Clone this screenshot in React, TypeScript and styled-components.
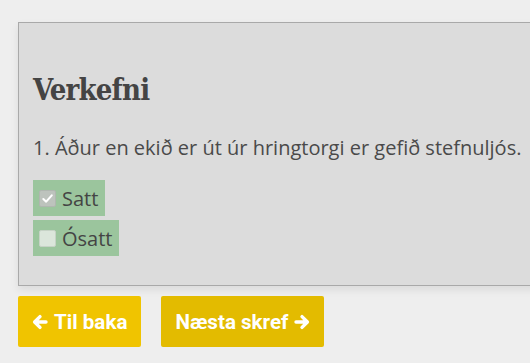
import React from 'react';
import styled, { createGlobalStyle } from 'styled-components';

const GlobalStyle = createGlobalStyle`
  html, body {
    margin: 0;
    padding: 0;
    background: #eeeeee;
    overflow: hidden;
  }
`;

type Option = {
  label: string;
  checked: boolean;
};

const options: Option[] = [
  { label: 'Satt', checked: true },
  { label: 'Ósatt', checked: false },
];

// bold arrow, drawn with a thick round-capped stroke
function Arrow({ flip }: { flip?: boolean }) {
  return (
    <svg
      width="16"
      height="16"
      viewBox="0 0 16 16"
      aria-hidden="true"
      style={flip ? { transform: 'scaleX(-1)' } : undefined}
    >
      <path
        d="M8 2.6 L2.6 8 L8 13.4 M2.8 8 L14 8"
        stroke="#fff"
        strokeWidth="3.4"
        strokeLinecap="round"
        strokeLinejoin="round"
        fill="none"
      />
    </svg>
  );
}

export default function App() {
  return (
    <>
      <GlobalStyle />
      <Page>
        <Panel>
          <Heading>Verkefni</Heading>
          <Question>1. Áður en ekið er út úr hringtorgi er gefið stefnuljós.</Question>
          <Answers>
            {options.map((o) => (
              <Answer key={o.label}>
                <Box checked={o.checked}>
                  {o.checked && (
                    <svg width="13" height="13" viewBox="0 0 14 14" aria-hidden="true">
                      <path
                        d="M2.5 7.5 L5.6 10.4 L11.6 3.6"
                        stroke="#fff"
                        strokeWidth="2.2"
                        fill="none"
                        strokeLinecap="round"
                        strokeLinejoin="round"
                      />
                    </svg>
                  )}
                </Box>
                <span>{o.label}</span>
              </Answer>
            ))}
          </Answers>
        </Panel>
        <Nav>
          <NavButton tone="#f0c400">
            <Arrow />
            Til baka
          </NavButton>
          <NavButton tone="#e3bb00">
            Næsta skref
            <Arrow flip />
          </NavButton>
        </Nav>
      </Page>
    </>
  );
}

const Page = styled.div`
  padding: 22px 0 0 18px;
  width: 600px;
`;

const Panel = styled.div`
  width: 560px;
  box-sizing: border-box;
  background: #dcdcdc;
  border: 1px solid #a9a9a9;
  padding: 47px 14px 29px 14px;
  box-shadow: 0 4px 8px rgba(0, 0, 0, 0.08);
`;

const Heading = styled.h2`
  margin: 0;
  font-family: 'DejaVu Serif Condensed', 'DejaVu Serif', serif;
  font-weight: bold;
  font-size: 29px;
  letter-spacing: -0.8px;
  line-height: 40px;
  color: #444444;
`;

const Question = styled.p`
  margin: 25px 0 19px 0;
  font-family: 'Open Sans', sans-serif;
  font-size: 20px;
  line-height: 26px;
  color: #4a4a4a;
`;

const Answers = styled.div`
  display: flex;
  flex-direction: column;
  align-items: flex-start;
  gap: 4px;
`;

const Answer = styled.label`
  display: inline-flex;
  align-items: center;
  gap: 6px;
  height: 36px;
  padding: 0 7px 0 6px;
  background: #9bc59d;
  font-family: 'Open Sans', sans-serif;
  font-size: 20px;
  color: #444444;
`;

const Box = styled.span<{ checked: boolean }>`
  display: inline-flex;
  align-items: center;
  justify-content: center;
  width: 17px;
  height: 17px;
  box-sizing: border-box;
  border-radius: 2px;
  border: 1px solid ${({ checked }) => (checked ? '#b0b7b0' : '#c6d3c6')};
  background: ${({ checked }) => (checked ? '#bdc3bd' : '#dbe6db')};
`;

const Nav = styled.div`
  display: flex;
  gap: 20px;
  margin-top: 10px;
`;

const NavButton = styled.button<{ tone: string }>`
  display: inline-flex;
  align-items: center;
  gap: 6px;
  height: 51px;
  padding: 0 14px;
  border: none;
  border-radius: 2px;
  background: ${({ tone }) => tone};
  color: #ffffff;
  font-family: Roboto, 'Liberation Sans', sans-serif;
  font-weight: bold;
  font-size: 20.6px;
  cursor: pointer;
`;
